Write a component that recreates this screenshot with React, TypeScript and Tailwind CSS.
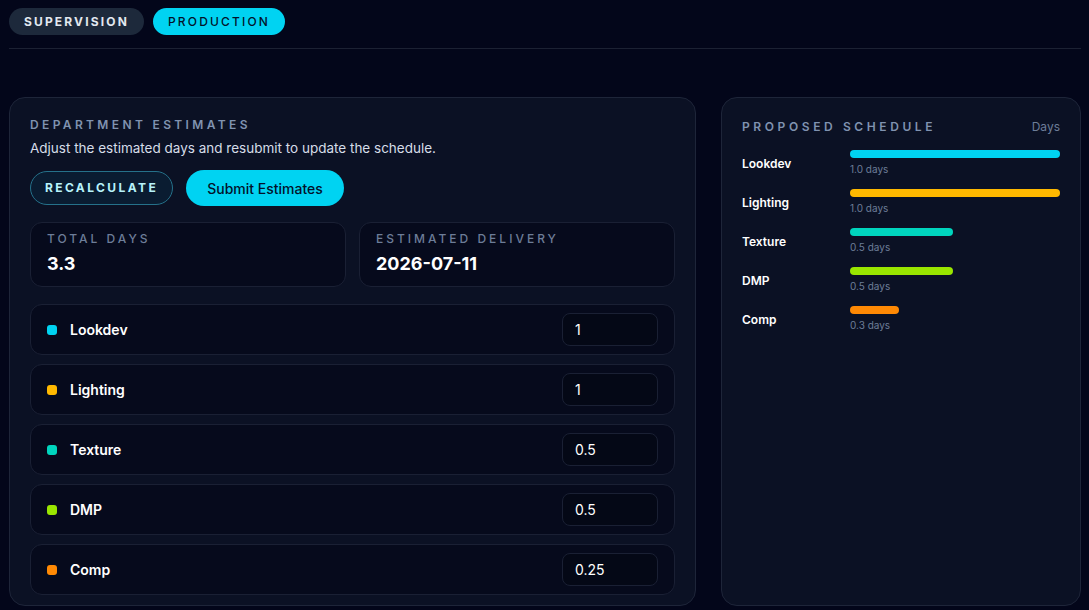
import { useState } from "react";

type Dept = { name: string; color: string; days: string; value: number; pct: number };

const DEPTS: Dept[] = [
  { name: "Lookdev", color: "bg-[#00d3f2]", days: "1", value: 1, pct: 100 },
  { name: "Lighting", color: "bg-[#ffb900]", days: "1", value: 1, pct: 100 },
  { name: "Texture", color: "bg-[#00d5be]", days: "0.5", value: 0.5, pct: 49 },
  { name: "DMP", color: "bg-[#9ae600]", days: "0.5", value: 0.5, pct: 49 },
  { name: "Comp", color: "bg-[#ff8904]", days: "0.25", value: 0.25, pct: 23.5 },
];

export default function App() {
  const [tab, setTab] = useState("production");
  const [values, setValues] = useState(DEPTS.map((d) => d.days));

  return (
    <div
      className="min-h-[610px] bg-[#03061a] px-[9px] pt-2 text-white"
      style={{ fontFamily: "Inter, 'Noto Sans', sans-serif" }}
    >
      {/* tabs */}
      <div className="flex items-center gap-[9px]">
        <button
          type="button"
          onClick={() => setTab("supervision")}
          className={`h-[27px] w-[135px] rounded-full text-[12px] font-bold tracking-[0.18em] ${
            tab === "supervision" ? "bg-[#00d3f2] text-[#03122a]" : "bg-[#1d293b] text-[#e2e8f0]"
          }`}
        >
          SUPERVISION
        </button>
        <button
          type="button"
          onClick={() => setTab("production")}
          className={`h-[27px] w-[132px] rounded-full text-[12px] font-medium tracking-[0.18em] ${
            tab === "production" ? "bg-[#00d3f2] text-[#03122a]" : "bg-[#1d293b] text-[#e2e8f0]"
          }`}
        >
          PRODUCTION
        </button>
      </div>
      <div className="mt-[13px] h-px w-[1072px] bg-[#1c2133]" />

      <div className="mt-[48px] flex gap-[25px]">
        {/* department estimates */}
        <section className="h-[509px] w-[687px] shrink-0 rounded-2xl border border-[#1e2539] bg-[#0b1124] px-5 pt-[19px]">
          <h2 className="text-[12px] font-semibold leading-[16px] tracking-[0.28em] text-[#8093b0]">
            DEPARTMENT ESTIMATES
          </h2>
          <p className="mt-[6px] text-[13.5px] leading-[18px] text-[#d6dde8]">
            Adjust the estimated days and resubmit to update the schedule.
          </p>
          <div className="mt-[14px] flex gap-[13px]">
            <button
              type="button"
              className="h-[34px] w-[143px] rounded-full border border-[#25718a] bg-[#0a1c31] text-[12px] font-bold tracking-[0.2em] text-[#b7f3fb]"
            >
              RECALCULATE
            </button>
            <button
              type="button"
              className="h-[36px] w-[158px] -translate-y-px rounded-full bg-[#00d3f2] text-[14px] font-medium text-[#03122a]"
            >
              Submit Estimates
            </button>
          </div>

          <div className="mt-[15px] grid grid-cols-2 gap-[13px]">
            <div className="h-[65px] rounded-xl border border-[#1a2034] bg-[#060a1c] px-4 pt-[8px]">
              <div className="text-[12px] font-medium leading-[16px] tracking-[0.25em] text-[#6d7d98]">
                TOTAL DAYS
              </div>
              <div className="mt-[6px] text-[18px] font-bold leading-[22px] text-white">3.3</div>
            </div>
            <div className="h-[65px] rounded-xl border border-[#1a2034] bg-[#060a1c] px-4 pt-[8px]">
              <div className="text-[12px] font-medium leading-[16px] tracking-[0.25em] text-[#6d7d98]">
                ESTIMATED DELIVERY
              </div>
              <div className="mt-[6px] text-[18px] font-bold leading-[22px] text-white">2026-07-11</div>
            </div>
          </div>

          <div className="mt-[17px] flex flex-col gap-[9px]">
            {DEPTS.map((d, i) => (
              <div
                key={d.name}
                className="flex h-[51px] items-center justify-between rounded-xl border border-[#1a2034] bg-[#060a1c] pl-4 pr-4"
              >
                <div className="flex items-center gap-[13px]">
                  <span className={`h-[10px] w-[10px] shrink-0 rounded-[3px] ${d.color}`} />
                  <span className="text-[14px] font-semibold text-white">{d.name}</span>
                </div>
                <input
                  value={values[i]}
                  onChange={(e) => {
                    const next = [...values];
                    next[i] = e.target.value;
                    setValues(next);
                  }}
                  className="h-[33px] w-[96px] rounded-lg border border-[#1a2034] bg-[#040816] px-3 text-[14px] text-white outline-none"
                />
              </div>
            ))}
          </div>
        </section>

        {/* proposed schedule */}
        <section className="h-[509px] w-[360px] shrink-0 rounded-2xl border border-[#1e2539] bg-[#0b1124] px-5 pt-[20px]">
          <div className="flex items-center justify-between">
            <h2 className="text-[12px] font-semibold leading-[16px] tracking-[0.3em] text-[#8093b0]">
              PROPOSED SCHEDULE
            </h2>
            <span className="text-[12px] text-[#6d7d98]">Days</span>
          </div>
          <div className="mt-[14px] flex flex-col gap-[13px]">
            {DEPTS.map((d) => (
              <div key={d.name} className="flex h-[26px] items-center">
                <span className="w-[108px] shrink-0 pt-[2px] text-[12px] font-semibold text-white">{d.name}</span>
                <div className="flex-1">
                  <div className="h-[8px] w-full">
                    <div className={`h-[8px] rounded-full ${d.color}`} style={{ width: `${d.pct}%` }} />
                  </div>
                  <div className="mt-[5px] text-[10px] leading-[13px] text-[#6d7d98]">
                    {(Math.round(d.value * 10) / 10).toFixed(1)} days
                  </div>
                </div>
              </div>
            ))}
          </div>
        </section>
      </div>
    </div>
  );
}
